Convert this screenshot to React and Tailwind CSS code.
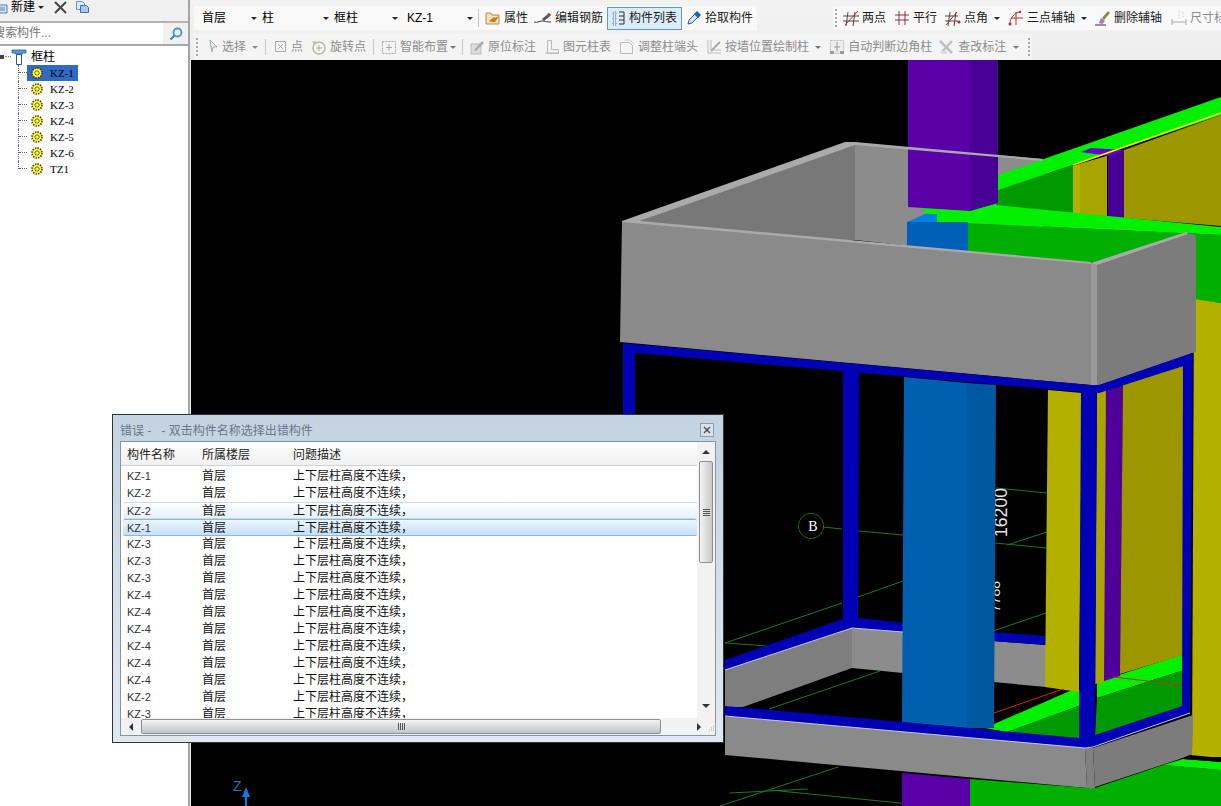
const cjk = { fontFamily: '"Liberation Sans", "Noto Sans CJK SC", sans-serif' }

function Caret({ className = "" }) {
  return <span className={"inline-block shrink-0 w-0 h-0 border-x-[3px] border-x-transparent border-t-[3px] border-t-[#222] " + className}></span>
}

function Grip() {
  return (
    <span className="flex flex-col gap-[2px] w-[2px] shrink-0">
      <i className="block w-[2px] h-[2px] bg-[#a8a8a8]"></i>
      <i className="block w-[2px] h-[2px] bg-[#a8a8a8]"></i>
      <i className="block w-[2px] h-[2px] bg-[#a8a8a8]"></i>
      <i className="block w-[2px] h-[2px] bg-[#a8a8a8]"></i>
      <i className="block w-[2px] h-[2px] bg-[#a8a8a8]"></i>
    </span>
  )
}

function Ico({ children, w = 16 }) {
  return (
    <svg width={w} height="16" viewBox={`0 0 ${w} 16`} className="shrink-0" fill="none">
      {children}
    </svg>
  )
}

function Gear() {
  return (
    <svg width="12" height="12" viewBox="0 0 12 12" className="shrink-0">
      <circle cx="6" cy="6" r="5" fill="#f4ec20" stroke="#3a3a10" strokeWidth="1.600" strokeDasharray="1.400 1.200" />
      <circle cx="6" cy="6" r="3.800" fill="#ffff30" />
      <path d="M6 3v6M3 6h6M4 4l4 4M8 4l-4 4" stroke="#5a5a20" strokeWidth="0.900" />
      <circle cx="6" cy="6" r="1.300" fill="#fff860" />
    </svg>
  )
}

function ToolBtn({ icon, label, ml = 0, gray, active }) {
  return (
    <div
      className={
        "flex items-center shrink-0 gap-[3px] h-[23px] text-[12px] whitespace-nowrap " +
        (gray ? "text-[#8c8c8c] " : "text-[#1a1a1a] ") +
        (active ? "border border-[#5a9bd5] bg-[#dcecf9] px-[4px] " : "")
      }
      style={{ marginLeft: ml }}
    >
      {icon}
      <span>{label}</span>
    </div>
  )
}

const gr = "#a8a8a8"
const iconProps = {
  shu: (
    <Ico>
      <path d="M1 3h5l1 2h7v9H1z" fill="#f5e2a8" stroke="#a89060" />
      <path d="M4 11l5-4 1 1 4-2-4 6H6z" fill="#c87a2a" />
    </Ico>
  ),
  edit: (
    <Ico w={18}>
      <path d="M0 12c4 1 5-1 8-1 3 0 4 1 9 1" stroke="#333" />
      <path d="M8 9l6-5 2 2-6 5z" fill="#555" />
      <path d="M14 3.500l2.500 2" stroke="#c03020" strokeWidth="2" />
    </Ico>
  ),
  list: (
    <Ico w={14}>
      <path d="M1 2h3v3H1zM1 7h3v3H1zM1 12h3v3H1z" stroke="#4a7ab0" strokeDasharray="1 1" />
      <path d="M7 2h5v12H7M7 6h5M7 10h5" stroke="#333" />
    </Ico>
  ),
  pick: (
    <Ico>
      <path d="M2 14l1-4 6-6 3 3-6 6z" fill="#cfe6fa" stroke="#2a5a9a" />
      <path d="M8 4l3-3 4 4-3 3z" fill="#1f5fae" />
    </Ico>
  ),
  twoPt: (
    <Ico>
      <path d="M5 2L3 16M12 2l-2 14M0 6h16M0 11h16" stroke="#4a4a4a" />
      <path d="M2 15L15 1" stroke="#c02020" />
    </Ico>
  ),
  par: (
    <Ico>
      <path d="M5 1v14M11 1v14M1 5h14M1 10h14" stroke="#8a3040" />
    </Ico>
  ),
  ang: (
    <Ico>
      <path d="M5 2L3 16M11 2L9 16M0 6h13M0 11h13" stroke="#4a4a4a" />
      <path d="M1 15L12 2" stroke="#c02020" />
      <circle cx="14" cy="12" r="1.500" fill="#d02020" />
    </Ico>
  ),
  three: (
    <Ico>
      <path d="M2 14C2 7 7 3 12 2M8 2v13M3 8h12" stroke="#b03030" />
      <circle cx="2" cy="14" r="1.500" fill="#d02020" />
      <circle cx="12" cy="2" r="1.200" fill="#d02020" />
    </Ico>
  ),
  del: (
    <Ico>
      <path d="M0 15h11" stroke="#333" />
      <path d="M4 13l2-5 4 3-3 3z" fill="#b070c0" />
      <path d="M7 8l6-7 2 2-6 7z" fill="#8a8a50" />
    </Ico>
  ),
  size: (
    <Ico>
      <path d="M1 9v6M15 9v6M1 12h14" stroke="#aaa" />
      <path d="M8 1v8M12 2v6" stroke="#ccc" strokeDasharray="1 1" />
    </Ico>
  ),
  sel: (
    <Ico w={12}>
      <path d="M3 1l7 7H6l-1 5z" fill="#eee" stroke={gr} />
    </Ico>
  ),
  pt: (
    <Ico w={14}>
      <path d="M1.500 2.500h10v10h-10z" fill="#f4f4f4" stroke={gr} />
      <path d="M4 5l5 5M9 5l-5 5" stroke={gr} />
    </Ico>
  ),
  rot: (
    <Ico>
      <circle cx="8" cy="9" r="6" stroke="#b8b8a8" strokeWidth="1.500" />
      <path d="M8 6v6M5 9h6" stroke={gr} />
      <path d="M1 2l3 4 2-3z" fill="#b8b8a8" />
    </Ico>
  ),
  smart: (
    <Ico>
      <path d="M1.500 2.500h13v12h-13z" stroke={gr} strokeDasharray="2 1" />
      <path d="M8 5v7M5 8.500h6" stroke={gr} />
    </Ico>
  ),
  orig: (
    <Ico>
      <path d="M2 5h10v10H2z" fill="#ddd" stroke="#bbb" />
      <path d="M5 11l8-9 2 2-8 8z" fill="#aaa" />
    </Ico>
  ),
  table: (
    <Ico>
      <path d="M3.500 1.500h4v9h7v4h-11z" fill="#f2f2f2" stroke="#bbb" />
      <path d="M1 14h14" stroke="#bbb" />
    </Ico>
  ),
  adj: (
    <Ico>
      <path d="M1.500 3.500h9l3 3v8h-12z" fill="#f6f6f6" stroke="#bbb" />
      <path d="M6 1h5l4 4" stroke="#ccc" />
    </Ico>
  ),
  wall: (
    <Ico>
      <path d="M2 1v13h13M5 1v10h10" stroke="#bbb" />
      <path d="M5 12L14 3" stroke="#aaa" strokeWidth="2" />
    </Ico>
  ),
  auto: (
    <Ico>
      <path d="M1.500 1.500h13v13h-13z" fill="#eee" stroke="#bbb" strokeDasharray="2 1" />
      <path d="M8 3v10M5 8h6" stroke="#999" />
      <path d="M1 12h4v3H1zM11 12h4v3h-4z" fill="#999" />
    </Ico>
  ),
  check: (
    <Ico w={17}>
      <path d="M2 2l12 12M14 2L3 14" stroke="#c0c0c0" strokeWidth="2.500" />
      <path d="M3 12h6v3H3z" fill="#ddd" />
    </Ico>
  ),
}

function TopToolbars() {
  return (
    <div className="h-[60px] bg-gradient-to-b from-[#f2f2f2] to-[#eeeeee] shrink-0 pl-[4px] pt-[6px]" style={cjk}>
      {/* row one */}
      <div className="flex h-[24px] items-center">
        <div className="flex items-center shrink-0 h-[24px] w-[563px] bg-[#f9f9f9] pl-[8px]">
          <span className="text-[12px] w-[49px] shrink-0">首层</span>
          <Caret />
          <span className="text-[12px] w-[61px] shrink-0 ml-[5px]">柱</span>
          <Caret />
          <span className="text-[12px] w-[58px] shrink-0 ml-[5px]">框柱</span>
          <Caret />
          <span className="text-[12px] w-[60px] shrink-0 ml-[9px]">KZ-1</span>
          <Caret />
          <span className="w-px h-[18px] shrink-0 bg-[#c8c8c8] ml-[5px]"></span>
          <ToolBtn icon={iconProps.shu} label="属性" ml={6} />
          <ToolBtn icon={iconProps.edit} label="编辑钢筋" ml={6} />
          <ToolBtn icon={iconProps.list} label="构件列表" ml={4} active />
          <ToolBtn icon={iconProps.pick} label="拾取构件" ml={4} />
        </div>
        <div className="flex items-center h-[24px] ml-[76px] flex-1 bg-[#f9f9f9] pl-[2px] overflow-hidden">
          <Grip />
          <ToolBtn icon={iconProps.twoPt} label="两点" ml={6} />
          <ToolBtn icon={iconProps.par} label="平行" ml={8} />
          <ToolBtn icon={iconProps.ang} label="点角" ml={8} />
          <Caret className="ml-[6px]" />
          <ToolBtn icon={iconProps.three} label="三点辅轴" ml={8} />
          <Caret className="ml-[6px]" />
          <ToolBtn icon={iconProps.del} label="删除辅轴" ml={8} />
          <ToolBtn icon={iconProps.size} label="尺寸标注" ml={9} gray />
        </div>
      </div>
      {/* row two */}
      <div className="flex items-center h-[26px] mt-[4px] pl-[2px] w-[838px] bg-[#f4f4f4]">
        <Grip />
        <ToolBtn icon={iconProps.sel} label="选择" ml={9} gray />
        <Caret className="ml-[6px] opacity-50" />
        <span className="w-px h-[16px] bg-[#c8c8c8] ml-[7px]"></span>
        <ToolBtn icon={iconProps.pt} label="点" ml={8} gray />
        <ToolBtn icon={iconProps.rot} label="旋转点" ml={8} gray />
        <span className="w-px h-[16px] bg-[#c8c8c8] ml-[7px]"></span>
        <ToolBtn icon={iconProps.smart} label="智能布置" ml={7} gray />
        <Caret className="ml-[2px] opacity-60" />
        <span className="w-px h-[16px] bg-[#c8c8c8] ml-[6px]"></span>
        <ToolBtn icon={iconProps.orig} label="原位标注" ml={6} gray />
        <ToolBtn icon={iconProps.table} label="图元柱表" ml={8} gray />
        <ToolBtn icon={iconProps.adj} label="调整柱端头" ml={8} gray />
        <ToolBtn icon={iconProps.wall} label="按墙位置绘制柱" ml={8} gray />
        <Caret className="ml-[6px] opacity-60" />
        <ToolBtn icon={iconProps.auto} label="自动判断边角柱" ml={8} gray />
        <ToolBtn icon={iconProps.check} label="查改标注" ml={6} gray />
        <Caret className="ml-[7px] opacity-60" />
        <span className="ml-[9px]"><Grip /></span>
      </div>
    </div>
  )
}

const treeItems = ["KZ-1", "KZ-2", "KZ-3", "KZ-4", "KZ-5", "KZ-6", "TZ1"]

function LeftPanel() {
  return (
    <aside className="w-[190px] shrink-0 flex flex-col bg-white border-r-2 border-[#a4a4a4] overflow-hidden" style={cjk}>
      <div className="h-[21px] bg-[#f0f0f0] flex items-center text-[12px] text-black shrink-0 pb-[7px]">
        <svg width="8" height="14" viewBox="0 0 8 14" className="shrink-0">
          <path d="M-3 5h10v8H-3z" fill="#d8e6f5" stroke="#4a7ab0" />
          <path d="M-1 8h6M-1 10h6" stroke="#4a7ab0" />
        </svg>
        <span className="ml-[3px]">新建</span>
        <Caret className="ml-[3px]" />
        <svg width="13" height="13" viewBox="0 0 13 13" className="ml-[10px] shrink-0">
          <path d="M1 1l11 11M12 1L1 12" stroke="#444" strokeWidth="2" />
        </svg>
        <svg width="15" height="14" viewBox="0 0 15 14" className="ml-[8px] shrink-0">
          <path d="M1.500 1.500h6l2 2v6h-8z" fill="#dce9f7" stroke="#6a93c4" />
          <path d="M5.500 5.500h6l2 2v5h-8z" fill="#a9c8ea" stroke="#3c6eae" />
        </svg>
      </div>
      <div className="h-[25px] flex items-stretch border-y-2 border-y-[#a8a8a8] border-t-[#b4b4b4] shrink-0 bg-[#f0f0f0]">
        <div className="w-[163px] bg-white text-[12px] text-[#777] leading-[21px] whitespace-nowrap overflow-hidden">
          <span className="ml-[-7px] inline-block">搜索构件...</span>
        </div>
        <div className="flex-1 flex items-center justify-center">
          <svg width="14" height="14" viewBox="0 0 14 14">
            <circle cx="8.500" cy="5.500" r="4" fill="#e4f2fb" stroke="#4c93c4" strokeWidth="1.800" />
            <path d="M5.500 8.500L1.500 12.500" stroke="#3a7fb5" strokeWidth="2" />
          </svg>
        </div>
      </div>
      <div className="flex-1 pt-[2px]">
        <div className="h-[17px] flex items-center">
          <span className="w-[4px] h-[4px] bg-[#444] shrink-0"></span>
          <span className="w-[6px] border-t border-dotted border-[#b08050] ml-[1px]"></span>
          <svg width="16" height="16" viewBox="0 0 16 16" className="shrink-0">
            <path d="M1 1h14v3h-3.500v1H4.500V4H1z" fill="#5a9ad8" stroke="#2a5a9a" strokeWidth="0.800" />
            <path d="M5.500 5.500h5v10h-5z" fill="#fff" stroke="#2a5a9a" />
          </svg>
          <span className="ml-[4px] text-[12px] text-black">框柱</span>
        </div>
        {treeItems.map((t, i) => (
          <div key={t} className="h-[16px] flex pl-[18px]">
            <span className={"border-l border-dotted border-[#666] w-[9px] shrink-0 " + (i === treeItems.length - 1 ? "h-[8px] " : "h-full ")}>
              <span className="block h-[8px] border-b border-dotted border-[#666]"></span>
            </span>
            <div className={"flex items-center h-full w-[51px] pl-[4px] " + (i === 0 ? "bg-[#316ac5]" : "")}>
              <Gear />
              <span className="ml-[7px] text-[11px] text-black" style={{ fontFamily: '"Liberation Serif", serif' }}>{t}</span>
            </div>
          </div>
        ))}
      </div>
    </aside>
  )
}

const GRAY_F = "#8a8a8a"
const GRAY_S = "#7c7c7c"
const RIM = "#aaaaaa"
const BLUE = "#0000b4"
const BRIGHT = "#00f000"
const GREEN = "#00b000"
const DARK = "#009a00"
const YEL = "#b4b000"
const OLIVE = "#9c9600"
const PURP = "#5a00a8"
const PURP2 = "#480094"

const polys = [
  // upper box, inside
  ["855,143 1043,159 1043,260 855,240", "#8c8c8c"],
  ["640,221 855,143 855,240 640,240", "#787878"],
  // far beam and wall
  ["998,175 1221,97 1221,115 1073,165 998,190", BRIGHT],
  ["998,190 1073,165 1073,214 996,206", DARK],
  ["1073,166 1107,156 1107,216 1073,214", YEL],
  ["1080,164 1107,156 1107,216 1080,214", "#a8a400"],
  ["1124,150 1221,115 1221,226 1124,218", OLIVE],
  ["1108,156 1124,150 1124,218 1108,217", PURP2],
  ["1081,152 1091,148 1124,150 1109,156", "#6a00d0"],
  // near beam
  ["968,223 1221,235 1221,303 1188,299 1188,240 1091,263 968,252", GREEN],
  ["921,208 996,205 1221,227 1221,235 968,223 937,222", BRIGHT],
  // stub and upper column
  ["907,222 968,222 968,252 907,246", "#0060b8"],
  ["907,222 925,214 937,214 937,222", "#0080e0"],
  ["908,60 970,60 970,211 908,207", PURP],
  ["970,60 998,60 998,203 970,211", PURP2],
  // far right wall
  ["1194,299 1221,303 1221,757 1192,757", YEL],
  // upper box, outside
  ["622,221 1091,263 1091,385 620,342", GRAY_F],
  ["1091,263 1097,262 1097,386 1091,385", "#9a9a9a"],
  ["1097,263 1186,233 1196,235 1196,352 1097,386", GRAY_S],
  ["622,221 845,142 855,142 1043,159 1043,161 855,145 640,221 1091,262 1091,264 622,222", RIM],
  ["1091,263 1186,232 1188,234 1097,265", RIM],
]

const lowerPolys = [
  // lower box back walls
  ["725,670 852,628 852,668 743,707 725,707", "#7e7e7e"],
  ["852,628 903,632 903,673 852,668", "#8c8c8c"],
  ["993,641 1046,645 1046,687 993,682", "#8c8c8c"],
  ["725,660 843,619 858,618 903,623 903,632 852,628 725,670", BLUE],
  ["993,632 1046,636 1046,645 993,641", BLUE],
  // floor slabs
  ["985,728 1072,690 1081,690 1081,705 1007,732", BRIGHT],
  ["1007,732 1081,705 1081,740", DARK],
  ["1097,682 1184,654 1184,670 1097,698", BRIGHT],
  ["1097,698 1184,670 1184,708 1095,737", DARK],
  // yellow walls, purple
  ["1048,390 1082,393 1079,692 1045,687", YEL],
  ["1097,388 1107,388 1105,682 1095,684", "#a8a400"],
  ["1106,388 1123,385 1120,676 1104,681", "#50009a"],
  ["1123,385 1184,361 1183,655 1120,674", OLIVE],
  // middle column
  ["904,377 967,383 967,728 902,722", "#0060b0"],
  ["967,383 996,385 994,728 967,728", "#0058a0"],
]

const framePolys = [
  // upper ring
  ["623,343 1091,385 1099,385 1192,353 1193,363 1099,393 1081,392 636,353 623,351", BLUE],
  // uprights
  ["623,343 635,345 635,430 623,430", BLUE],
  ["843,364 859,366 858,620 843,620", BLUE],
  ["1081,388 1097,388 1095,738 1079,738", BLUE],
  ["1183,358 1193,354 1190,708 1182,708", BLUE],
  // lower ring
  ["725,706 1079,738 1095,735 1182,706 1190,706 1190,713 1093,747 1085,748 725,716", BLUE],
  // lower box outside
  ["725,716 1085,748 1087,788 725,755", GRAY_F],
  ["1085,748 1093,748 1095,788 1087,788", "#808080"],
  ["1093,748 1193,715 1192,755 1095,787", GRAY_S],
]

const bottomPolys = [
  ["902,773 970,779 970,806 902,806", PURP],
  ["970,779 1087,788 1095,788 1163,765 1221,770 1221,806 970,806", GREEN],
  ["1163,765 1183,759 1221,762 1221,770", BRIGHT],
]

const greenLines = [
  "823,527 842,529", "858,531 903,535", "996,488 1047,493", "995,543 1047,548", "1007,545 1047,532",
  "858,597 903,581", "725,643 842,603", "725,643 767,646", "993,631 1046,613", "769,709 880,671",
  "720,806 838,767", "730,793 808,789", "770,790 930,806", "1110,783 1221,793",
]

function Scene() {
  return (
    <svg viewBox="191 60 1030 746" className="block w-full h-full bg-black" preserveAspectRatio="none">
      {greenLines.map((l) => (
        <polyline key={l} points={l} stroke="#1a7a1a" strokeWidth="1" fill="none" />
      ))}
      <circle cx="811" cy="526" r="12.500" fill="none" stroke="#1a7a1a" strokeDasharray="4 0.500" />
      <text x="813" y="531" textAnchor="middle" fill="#fff" fontSize="14" fontFamily='"Liberation Serif", serif'>B</text>
      <text transform="translate(1007,537) rotate(-90)" fill="#e8e8e8" fontSize="18" textLength="49" lengthAdjust="spacingAndGlyphs" fontFamily='"Liberation Sans", sans-serif'>16200</text>
      <text transform="translate(1000,612) rotate(-90)" fill="#e8e8e8" fontSize="14" fontFamily='"Liberation Sans", sans-serif'>7788</text>
      {polys.map(([p, c]) => <polygon key={p} points={p} fill={c} />)}
      {lowerPolys.map(([p, c]) => <polygon key={p} points={p} fill={c} />)}
      <polyline points="994,713 1063,689" stroke="#e02020" fill="none" />
      <polyline points="1113,677 1182,685" stroke="#c03020" fill="none" />
      {framePolys.map(([p, c]) => <polygon key={p} points={p} fill={c} />)}
      <polyline points="725,716 1085,748 1093,747 1190,713" stroke="#c8c8e8" fill="none" />
      <polyline points="725,670 852,628 903,632" stroke="#c8c8e8" fill="none" />
      <polyline points="1073,165 1221,113" stroke="#ffff00" strokeWidth="1.500" fill="none" />
      {bottomPolys.map(([p, c]) => <polygon key={p} points={p} fill={c} />)}
      <polygon points="1180,759 1190,755 1221,758 1221,762 1183,759" fill="#000" />
      {/* axis */}
      <text x="233" y="791" fill="#2f6fbf" fontSize="14" fontFamily='"Liberation Sans", sans-serif'>Z</text>
      <path d="M245 806V797H242L246 787L250 797H247V806Z" fill="#0a7ae8" />
    </svg>
  )
}

const rows = ["KZ-1", "KZ-2", "KZ-2", "KZ-1", "KZ-3", "KZ-3", "KZ-3", "KZ-4", "KZ-4", "KZ-4", "KZ-4", "KZ-4", "KZ-4", "KZ-2", "KZ-3"]

function ErrorDialog() {
  return (
    <div className="absolute left-[112px] top-[414px] w-[612px] h-[329px] border border-[#333] bg-gradient-to-b from-[#c3d3e2] to-[#e0e9f3] flex flex-col px-[7px] pb-[6px]" style={cjk}>
      <div className="h-[26px] flex items-center justify-between shrink-0 pr-[2px]">
        <span className="text-[12px] text-[#66788a] pt-[5px]">错误 -{"\u00a0\u00a0\u00a0"}- 双击构件名称选择出错构件</span>
        <div className="w-[14px] h-[14px] mt-[4px] border border-[#8a9aaa] bg-[#d8e2ec] flex items-center justify-center">
          <svg width="8" height="8" viewBox="0 0 8 8"><path d="M1 1l6 6M7 1L1 7" stroke="#555" strokeWidth="1.500" /></svg>
        </div>
      </div>
      <div className="flex-1 min-h-0 border border-[#8794a2] bg-white flex flex-col">
        <div className="flex flex-1 min-h-0">
          <div className="flex-1 min-w-0 flex flex-col overflow-hidden">
            <div className="h-[24px] shrink-0 grid grid-cols-[75px_91px_1fr] items-center pl-[6px] pt-[3px] text-[12px] text-[#222] bg-gradient-to-b from-white to-[#f0f0f0] border-b border-[#d4d4d4]">
              <span>构件名称</span>
              <span>所属楼层</span>
              <span>问题描述</span>
            </div>
            <div className="pt-[2px]">
              {rows.map((k, i) => (
                <div
                  key={i}
                  className={
                    "h-[17px] grid grid-cols-[75px_91px_1fr] items-center pl-[4px] ml-[2px] text-[12px] text-[#111] leading-[17px] " +
                    (i === 2 ? "bg-gradient-to-b from-white to-[#e6f1fa] border-y border-[#c8dcec] rounded-[2px] " : "") +
                    (i === 3 ? "bg-gradient-to-b from-[#eef6fe] to-[#c4e0f8] border-y border-[#8fb4d4] rounded-[2px] " : "")
                  }
                >
                  <span className="text-[11px] text-[#333]">{k}</span>
                  <span>首层</span>
                  <span>上下层柱高度不连续，</span>
                </div>
              ))}
            </div>
          </div>
          {/* vertical scroll bar */}
          <div className="w-[18px] shrink-0 bg-[#f2f2f2] flex flex-col items-center">
            <div className="h-[19px] flex items-center justify-center shrink-0">
              <span className="w-0 h-0 border-x-[4px] border-x-transparent border-b-[4px] border-b-[#333]"></span>
            </div>
            <div className="w-[14px] h-[102px] shrink-0 border border-[#8f8f8f] rounded-[2px] bg-gradient-to-r from-[#f4f4f4] to-[#c8c8c8] flex flex-col items-center justify-center gap-[1px]">
              <i className="block w-[7px] h-px bg-[#555]"></i>
              <i className="block w-[7px] h-px bg-[#555]"></i>
              <i className="block w-[7px] h-px bg-[#555]"></i>
              <i className="block w-[7px] h-px bg-[#555]"></i>
            </div>
            <div className="flex-1"></div>
            <div className="h-[18px] flex items-center justify-center shrink-0 pb-[6px]">
              <span className="w-0 h-0 border-x-[4px] border-x-transparent border-t-[4px] border-t-[#333]"></span>
            </div>
          </div>
        </div>
        {/* horizontal scroll bar */}
        <div className="h-[17px] shrink-0 bg-[#f2f2f2] flex items-center">
          <div className="w-[20px] flex justify-center shrink-0">
            <span className="w-0 h-0 border-y-[4px] border-y-transparent border-r-[4px] border-r-[#333]"></span>
          </div>
          <div className="w-[520px] h-[15px] shrink-0 border border-[#8f8f8f] rounded-[2px] bg-gradient-to-b from-[#f4f4f4] to-[#c4c4c4] flex items-center justify-center gap-[1px]">
            <i className="block h-[7px] w-px bg-[#555]"></i>
            <i className="block h-[7px] w-px bg-[#555]"></i>
            <i className="block h-[7px] w-px bg-[#555]"></i>
            <i className="block h-[7px] w-px bg-[#555]"></i>
          </div>
          <div className="w-[48px] flex justify-end shrink-0 pr-[8px]">
            <span className="w-0 h-0 border-y-[4px] border-y-transparent border-l-[4px] border-l-[#333]"></span>
          </div>
          <div className="flex-1 flex justify-center text-[#999] text-[8px]">
            <svg width="8" height="8" viewBox="0 0 8 8"><path d="M6 1h1M4 3h1M6 3h1M2 5h1M4 5h1M6 5h1M0 7h1M2 7h1M4 7h1M6 7h1" stroke="#aaa" /></svg>
          </div>
        </div>
      </div>
    </div>
  )
}

export default function App() {
  return (
    <div className="relative w-[1221px] h-[806px] overflow-hidden flex bg-[#f0f0f0]">
      <LeftPanel />
      <div className="flex-1 min-w-0 flex flex-col">
        <TopToolbars />
        <div className="flex-1 min-h-0 ml-px">
          <Scene />
        </div>
      </div>
      <ErrorDialog />
    </div>
  )
}
